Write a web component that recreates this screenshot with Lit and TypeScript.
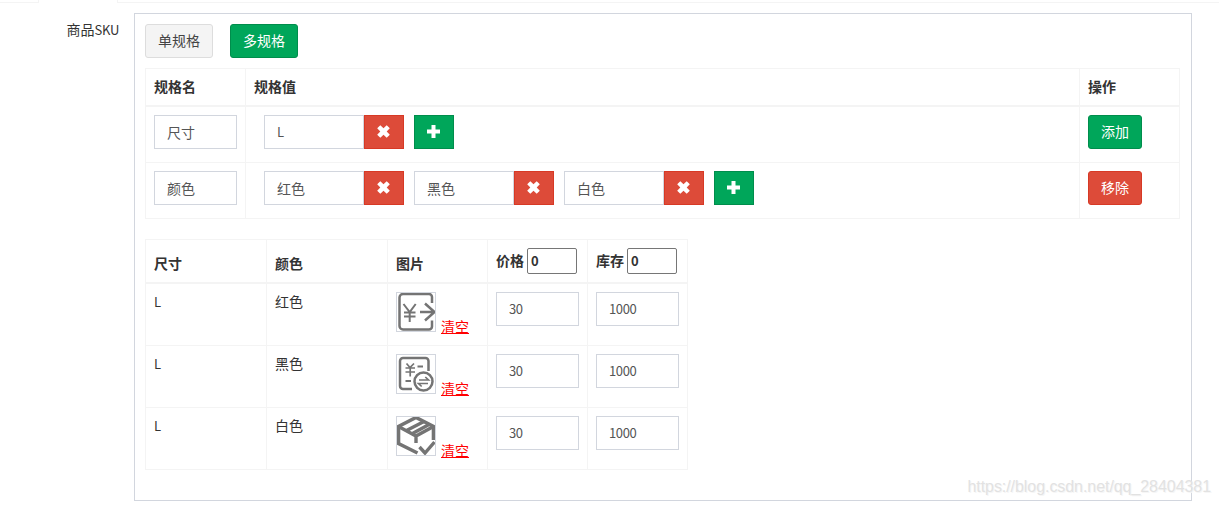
import { LitElement, html, css, svg } from 'lit';
import { customElement, property, state } from 'lit/decorators.js';

const ICONS: Record<string, unknown> = {
  transfer: svg`
    <path d="M36 11V5a3 3 0 0 0-3-3H7a3.500 3.500 0 0 0-3.500 3.500v28.500a3.500 3.500 0 0 0 3.500 3.500h26a3 3 0 0 0 3-3V28.500"/>
    <path stroke-width="2" d="M7.500 12l6.200 8 6-8M13.700 20v10M8 20.500h11.500M8 24.500h11.500"/>
    <path d="M24 20h14.500M29 11.500l9.500 8.500-9.500 8.500"/>`,
  exchange: svg`
    <path d="M32.500 17V7a3 3 0 0 0-3-3H7a3 3 0 0 0-3 3v25a3 3 0 0 0 3 3h9"/>
    <path stroke-width="1.700" d="M10.500 9.500l3.500 4 4-4M9.500 14h9.500M9.500 18h9.500M14.200 14v8.500"/>
    <path stroke-width="2" d="M21.500 12.500H27M9.500 27H15"/>
    <circle cx="27.500" cy="27.500" r="9"/>
    <path stroke-width="1.700" d="M23 26h9.500l-3.200-3M32 29.500h-9.500l3.200 3"/>`,
  parcel: svg`
    <path stroke-width="3.600" d="M21.500 37L2.500 27.500V10.500L20 1.500l17.500 9V24"/>
    <path stroke-width="3.400" d="M2.500 10.500L20 20l17.500-9.500M20 20v7M10.500 14.500L28 5.500M16.500 17.500L33 8.500"/>
    <path stroke-width="3.400" d="M23.500 31l5.500 6L38.500 26"/>`,
};

@customElement('sku-button')
export class SkuButton extends LitElement {
  @property({ reflect: true }) kind = 'default';
  @property() icon = '';

  static styles = css`
    :host { display: block; }

    button {
      display: flex;
      align-items: center;
      justify-content: center;
      box-sizing: border-box;
      height: 34px;
      padding: 0 12px 2px;
      border: 1px solid #ddd;
      border-radius: 3px;
      background: #f4f4f4;
      color: #444;
      font: 400 14px/20px "Noto Sans CJK SC", sans-serif;
    }

    button.success {
      background: #00a65a;
      border-color: #008d4c;
      color: #fff;
    }

    button.danger {
      background: #dd4b39;
      border-color: #d73925;
      color: #fff;
    }

    button.square {
      width: 40px;
      border-radius: 0;
      padding: 0 1px 1px 0;
    }

    svg {
      display: block;
      fill: currentColor;
    }
  `;

  _renderIcon() {
    return html`
      <svg width="13" height="13" viewBox="0 0 13 13">
        ${this.icon === 'plus'
          ? svg`<path d="M4.500 0h4v4.500H13v4H8.500V13h-4V8.500H0v-4h4.500z"/>`
          : svg`<path d="M3.300.200L6.500 3.200 9.700.200l3.100 3.100L9.700 6.500l3.100 3.200-3.100 3.100L6.500 9.800l-3.200 3L.200 9.700 3.300 6.500.200 3.300z"/>`}
      </svg>
    `;
  }

  render() {
    return html`
      <button class="${this.kind} ${this.icon ? 'square' : ''}">
        ${this.icon ? this._renderIcon() : html`<slot></slot>`}
      </button>
    `;
  }
}

@customElement('app-root')
export class AppRoot extends LitElement {
  @state() specs = [
    { name: '尺寸', values: ['L'], kind: 'success', action: '添加' },
    { name: '颜色', values: ['红色', '黑色', '白色'], kind: 'danger', action: '移除' },
  ];

  @state() skus = [
    { size: 'L', color: '红色', icon: 'transfer', price: '30', stock: '1000' },
    { size: 'L', color: '黑色', icon: 'exchange', price: '30', stock: '1000' },
    { size: 'L', color: '白色', icon: 'parcel', price: '30', stock: '1000' },
  ];

  static styles = css`
    :host {
      display: block;
      position: relative;
      height: 505px;
      overflow: hidden;
      background: #fff;
      color: #333;
      font: 400 14px/18px "Noto Sans CJK SC", sans-serif;
    }

    * { box-sizing: border-box; }

    .tabs {
      display: grid;
      grid-template-columns: 39px 78px 1fr;
      height: 3px;
    }

    .tabs div { border-bottom: 1px solid #f4f4f4; }
    .tabs .active {
      border: solid #f4f4f4;
      border-width: 0 1px;
      margin: 0 -1px;
    }

    .form {
      display: flex;
      padding-top: 10px;
    }

    .label {
      width: 134px;
      padding: 7px 15px 0 0;
      text-align: right;
    }

    .latin {
      font-size: 13px;
      letter-spacing: -0.4px;
    }

    .label .latin { letter-spacing: -0.3px; }

    .panel {
      width: 1058px;
      height: 488px;
      padding: 10px;
      border: 1px solid #d2d6de;
    }

    .modes {
      display: flex;
      gap: 17px;
      margin-bottom: 10px;
    }

    .table {
      display: grid;
      border: solid #f4f4f4;
      border-width: 1px 0 0 1px;
    }

    .specs {
      width: 1035px;
      grid-template-columns: 100px 1fr 100px;
      grid-template-rows: 38px 56px 56px;
      margin-bottom: 20px;
    }

    .skus {
      width: 543px;
      grid-template-columns: 121px 121px 100px 100px 100px;
      grid-template-rows: 44px 62px 62px 62px;
    }

    .cell {
      display: flex;
      align-items: flex-start;
      padding: 8px;
      border: solid #f4f4f4;
      border-width: 0 1px 1px 0;
    }

    .cell.latin { padding-top: 9px; }

    .head {
      align-items: flex-end;
      padding-bottom: 10px;
      border-bottom-width: 2px;
      font-weight: 700;
    }

    .values {
      gap: 10px;
      padding-left: 18px;
    }

    .value { display: flex; }

    input {
      display: block;
      margin: 0;
      outline: none;
      border-radius: 0;
      background: #fff;
      font: inherit;
    }

    .control {
      width: 83px;
      height: 34px;
      padding: 6px 12px;
      border: 1px solid #d2d6de;
      color: #555;
    }

    .control.latin {
      padding: 5px 12px 7px;
      font-size: 13px;
    }

    .value .control { width: 100px; }

    .batch {
      align-items: center;
      gap: 3px;
      padding-bottom: 8px;
    }

    .batch span { margin-bottom: 2px; }

    .batch input {
      width: 50px;
      height: 26px;
      padding: 0 3px 1px;
      border: 1px solid #767676;
      border-radius: 2px;
      color: #333;
      font-size: 13px;
    }

    .picture { gap: 5px; }

    .thumb {
      display: block;
      width: 40px;
      height: 40px;
      border: 1px solid #d2d6de;
      fill: none;
      stroke: #747474;
      stroke-width: 2.5;
    }

    .clear {
      margin-top: 25px;
      color: #f00;
      text-decoration: underline;
    }

    .watermark {
      position: absolute;
      right: 8px;
      bottom: 9px;
      color: #e2e2e2;
      text-shadow: 1px 1px 0 #f6f6f6;
      letter-spacing: -0.06px;
      font: 16px/18px "Liberation Sans", sans-serif;
    }
  `;

  _renderSpec(spec: any) {
    return html`
      <div class="cell"><input class="control" .value=${spec.name} /></div>
      <div class="cell values">
        ${spec.values.map((value: string) => html`
          <div class="value">
            <input class="control ${/^\w+$/.test(value) ? 'latin' : ''}" .value=${value} />
            <sku-button kind="danger" icon="remove"></sku-button>
          </div>
        `)}
        <sku-button kind="success" icon="plus"></sku-button>
      </div>
      <div class="cell"><sku-button kind=${spec.kind}>${spec.action}</sku-button></div>
    `;
  }

  _renderSku(sku: any) {
    return html`
      <div class="cell latin">${sku.size}</div>
      <div class="cell">${sku.color}</div>
      <div class="cell picture">
        <svg class="thumb" viewBox="1 1 38 38">${ICONS[sku.icon]}</svg>
        <a class="clear">清空</a>
      </div>
      <div class="cell"><input class="control latin" .value=${sku.price} /></div>
      <div class="cell"><input class="control latin" .value=${sku.stock} /></div>
    `;
  }

  render() {
    return html`
      <div class="tabs"><div></div><div class="active"></div><div></div></div>
      <div class="form">
        <div class="label">商品<span class="latin">SKU</span></div>
        <div class="panel">
          <div class="modes">
            <sku-button>单规格</sku-button>
            <sku-button kind="success">多规格</sku-button>
          </div>
          <div class="table specs">
            <div class="cell head">规格名</div>
            <div class="cell head">规格值</div>
            <div class="cell head">操作</div>
            ${this.specs.map((spec) => this._renderSpec(spec))}
          </div>
          <div class="table skus">
            <div class="cell head">尺寸</div>
            <div class="cell head">颜色</div>
            <div class="cell head">图片</div>
            <div class="cell head batch"><span>价格</span><input value="0" /></div>
            <div class="cell head batch"><span>库存</span><input value="0" /></div>
            ${this.skus.map((sku) => this._renderSku(sku))}
          </div>
        </div>
      </div>
      <div class="watermark">https://blog.csdn.net/qq_28404381</div>
    `;
  }
}
